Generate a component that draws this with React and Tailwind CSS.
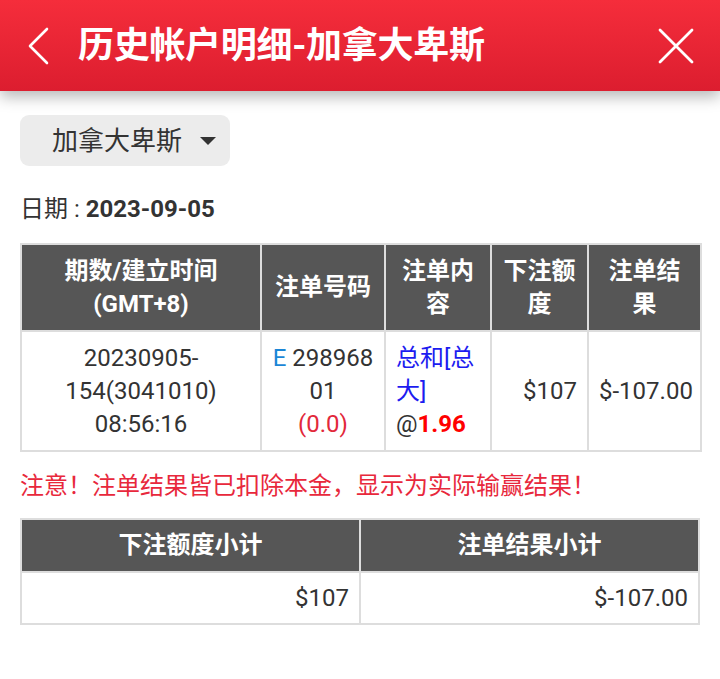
const font = { fontFamily: 'Roboto, "Noto Sans CJK SC", sans-serif' };

function Header() {
  return (
    <header className="relative z-10 flex h-[91px] items-center bg-gradient-to-b from-[#f52d3b] to-[#dc1d2f] shadow-[0_6px_14px_rgba(0,0,0,0.28)]">
      <button type="button" className="ml-[27px] flex h-[40px] w-[24px] items-center" aria-label="back">
        <svg width="22" height="38" viewBox="0 0 22 38" fill="none">
          <path d="M20 2 L3 19 L20 36" stroke="white" strokeWidth="2.6" strokeLinecap="round" strokeLinejoin="round" />
        </svg>
      </button>
      <h1 className="ml-[27px] text-[36px] font-bold leading-none tracking-[-0.3px] text-white">历史帐户明细-加拿大卑斯</h1>
      <button type="button" className="ml-auto mr-[26px] flex h-[36px] w-[36px] items-center justify-center" aria-label="close">
        <svg width="36" height="36" viewBox="0 0 36 36" fill="none">
          <path d="M2 2 L34 34 M34 2 L2 34" stroke="white" strokeWidth="2.8" strokeLinecap="round" />
        </svg>
      </button>
    </header>
  );
}

function Cell({ children, className = '' }) {
  return <td className={`border-2 border-[#dddddd] px-[10px] align-middle ${className}`}>{children}</td>;
}

function Th({ children, className = '' }) {
  return (
    <th className={`border-2 border-[#dddddd] bg-[#565656] px-[10px] text-center text-[24px] font-bold leading-[33px] text-white ${className}`}>
      {children}
    </th>
  );
}

export default function App() {
  return (
    <div className="min-h-[679px] bg-white text-[#333]" style={font}>
      <Header />
      <main className="px-[20px]">
        <div className="mt-[24px] flex h-[51px] w-[210px] items-center rounded-[9px] bg-[#ececec] pl-[32px]">
          <span className="text-[26px] leading-none text-[#333]">加拿大卑斯</span>
          <span className="ml-[18px] mt-[1px] h-0 w-0 border-x-[8px] border-t-[8px] border-x-transparent border-t-[#333]" />
        </div>

        <p className="mt-[29px] text-[24px] leading-[28px]">
          日期 : <span className="font-bold">2023-09-05</span>
        </p>

        <table className="mt-[20px] w-[680px] table-fixed border-collapse">
          <colgroup>
            <col className="w-[240px]" />
            <col className="w-[124px]" />
            <col className="w-[106px]" />
            <col className="w-[97px]" />
            <col className="w-[113px]" />
          </colgroup>
          <thead>
            <tr className="h-[87px]">
              <Th>期数/建立时间<br />(GMT+8)</Th>
              <Th>注单号码</Th>
              <Th>注单内容</Th>
              <Th>下注额度</Th>
              <Th>注单结果</Th>
            </tr>
          </thead>
          <tbody className="text-[24px] leading-[33px]">
            <tr className="h-[120px]">
              <Cell className="text-center">20230905-<br />154(3041010)<br />08:56:16</Cell>
              <Cell className="break-all text-center">
                <span className="text-[#1b86d6]">E</span> 29896801
                <br />
                <span className="text-[#e2283a]">(0.0)</span>
              </Cell>
              <Cell className="text-left">
                <span className="text-[#1c1cf0]">总和[总大]</span>
                <br />@<span className="font-bold text-[#ff0000]">1.96</span>
              </Cell>
              <Cell className="text-right">$107</Cell>
              <Cell className="whitespace-nowrap text-left">$-107.00</Cell>
            </tr>
          </tbody>
        </table>

        <p className="mt-[19px] text-[24px] leading-[30px] text-[#e8283c]">注意！注单结果皆已扣除本金，显示为实际输赢结果！</p>

        <table className="mt-[17px] w-[680px] table-fixed border-collapse">
          <thead>
            <tr className="h-[53px]">
              <Th>下注额度小计</Th>
              <Th>注单结果小计</Th>
            </tr>
          </thead>
          <tbody className="text-[24px] leading-[33px]">
            <tr className="h-[52px]">
              <Cell className="text-right">$107</Cell>
              <Cell className="text-right">$-107.00</Cell>
            </tr>
          </tbody>
        </table>
      </main>
    </div>
  );
}
